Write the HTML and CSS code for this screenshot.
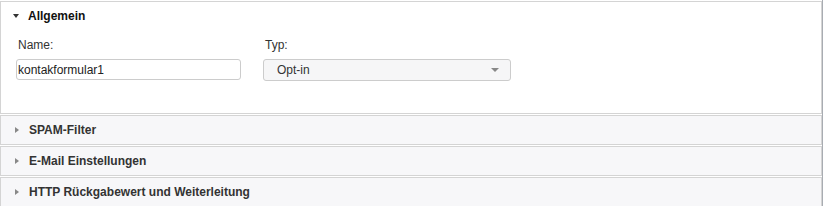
FILE: index.html
```html
<!DOCTYPE html>
<html lang="de">
<head>
    <meta charset="UTF-8">
    <title>Formular</title>
    <link rel="stylesheet" href="styles.css">
</head>
<body>
    <div class="page">
        <!-- Allgemein (offen) -->
        <div class="panel open">
            <div class="panel-head">
                <span class="arrow down"></span>
                <span>Allgemein</span>
            </div>
            <div class="panel-body">
                <div class="field name-field">
                    <label>Name:</label>
                    <input type="text" value="kontakformular1">
                </div>
                <div class="field typ-field">
                    <label>Typ:</label>
                    <div class="select">
                        <span>Opt-in</span>
                        <span class="select-arrow"></span>
                    </div>
                </div>
            </div>
        </div>

        <div class="panel closed">
            <div class="panel-head">
                <span class="arrow right"></span>
                <span>SPAM-Filter</span>
            </div>
        </div>
        <div class="panel closed">
            <div class="panel-head">
                <span class="arrow right"></span>
                <span>E-Mail Einstellungen</span>
            </div>
        </div>
        <div class="panel closed">
            <div class="panel-head">
                <span class="arrow right"></span>
                <span>HTTP Rückgabewert und Weiterleitung</span>
            </div>
        </div>
    </div>
</body>
</html>
```

FILE: styles.css
```css
body {
    margin: 0;
    padding: 0;
    background-color: #ffffff;
    font-family: "Liberation Sans", Arial, sans-serif;
    font-size: 12px;
    color: #333;
}

.page {
    width: 823px;
    height: 206px;
    box-sizing: border-box;
    padding-top: 1px;
    border-right: 1px solid #a8acb2;
}

.panel {
    border: 1px solid #d4d4d4;
    margin-bottom: 1px;
}

.panel-head {
    display: flex;
    align-items: center;
    height: 28px;
    padding-left: 12px;
    font-weight: bold;
}

.panel.open .panel-head {
    color: #111;
}

.panel.closed {
    background-color: #f7f7f9;
}

.arrow {
    display: inline-block;
    width: 0;
    height: 0;
    margin-right: 9px;
}

.arrow.down {
    border-left: 3.5px solid transparent;
    border-right: 3.5px solid transparent;
    border-top: 4px solid #333;
    margin-left: 0;
    margin-right: 9px;
}

.arrow.right {
    border-top: 3.5px solid transparent;
    border-bottom: 3.5px solid transparent;
    border-left: 4px solid #888;
    margin-left: 2px;
    margin-right: 10px;
}

.panel-body {
    display: flex;
    gap: 22px;
    padding: 8px 0 32px 15px;
}

.field label {
    display: block;
    height: 14px;
    line-height: 14px;
    margin-bottom: 7px;
    padding-left: 2px;
}

.name-field input {
    width: 225px;
    height: 21px;
    box-sizing: border-box;
    border: 1px solid #ccc;
    border-radius: 3px;
    padding: 0 1px;
    font-family: inherit;
    font-size: 12px;
    color: #222;
    outline: none;
}

.select {
    display: flex;
    align-items: center;
    justify-content: space-between;
    width: 248px;
    height: 22px;
    box-sizing: border-box;
    border: 1px solid #ccc;
    border-radius: 3px;
    background-color: #f6f6f7;
    padding: 0 11px 0 13px;
}

.select-arrow {
    width: 0;
    height: 0;
    border-left: 4px solid transparent;
    border-right: 4px solid transparent;
    border-top: 4px solid #888;
}
```
